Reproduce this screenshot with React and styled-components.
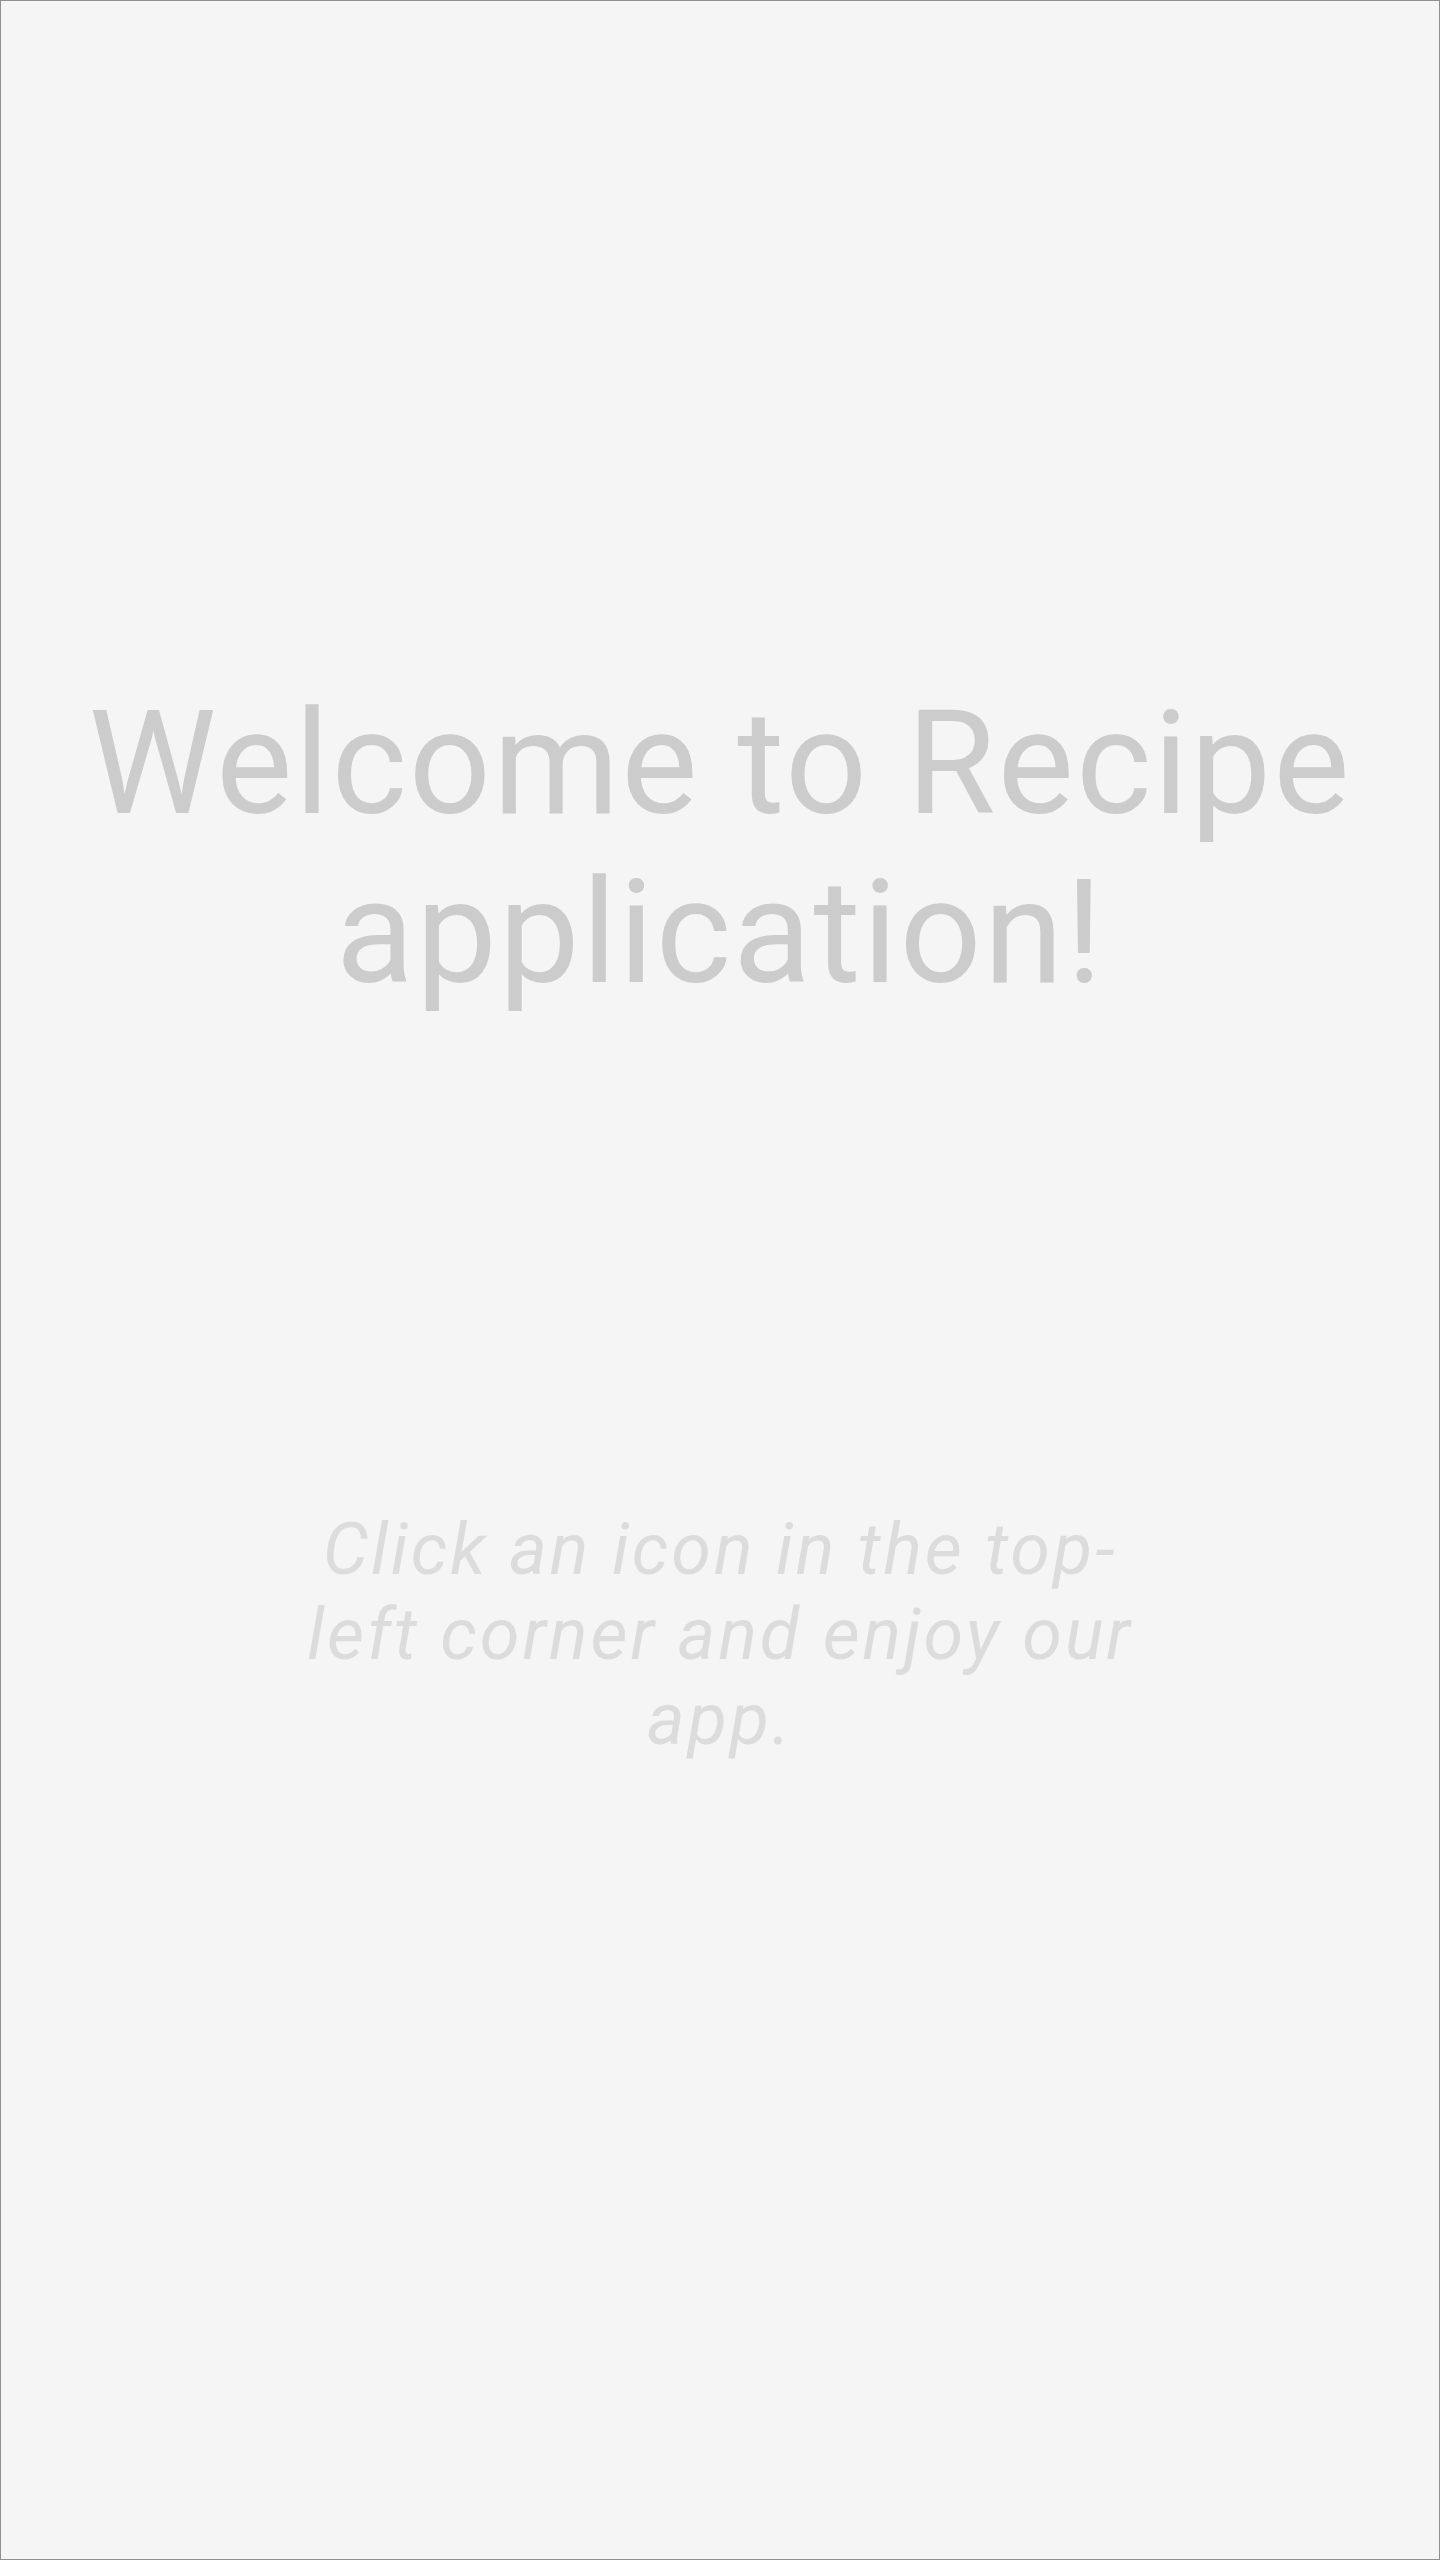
import { createGlobalStyle, styled } from "styled-components";

const GlobalStyle = createGlobalStyle`
  html, body {
    margin: 0;
    padding: 0;
  }

  body {
    background: #f5f5f5;
    font-family: Roboto, "Noto Sans", sans-serif;
  }
`;

export default function App() {
  return (
    <>
      <GlobalStyle />
      <Page>
        <Title>Welcome to Recipe application!</Title>
        <Hint>Click an icon in the top-left corner and enjoy our app.</Hint>
      </Page>
    </>
  );
}

const Page = styled.main`
  align-items: center;
  background: #f5f5f5;
  border: 1px solid #8f8f8f;
  box-sizing: border-box;
  display: flex;
  flex-direction: column;
  gap: 490px;
  min-height: 100vh;
  padding: 678px 40px 0;
`;

const Title = styled.h1`
  color: #cccccc;
  font-size: 144px;
  font-weight: 400;
  letter-spacing: 2px;
  line-height: normal;
  margin: 0;
  text-align: center;
`;

const Hint = styled.p`
  color: #dcdcdc;
  font-size: 72px;
  font-style: italic;
  letter-spacing: 0.04em;
  line-height: normal;
  margin: 0;
  max-width: 870px;
  text-align: center;
`;
